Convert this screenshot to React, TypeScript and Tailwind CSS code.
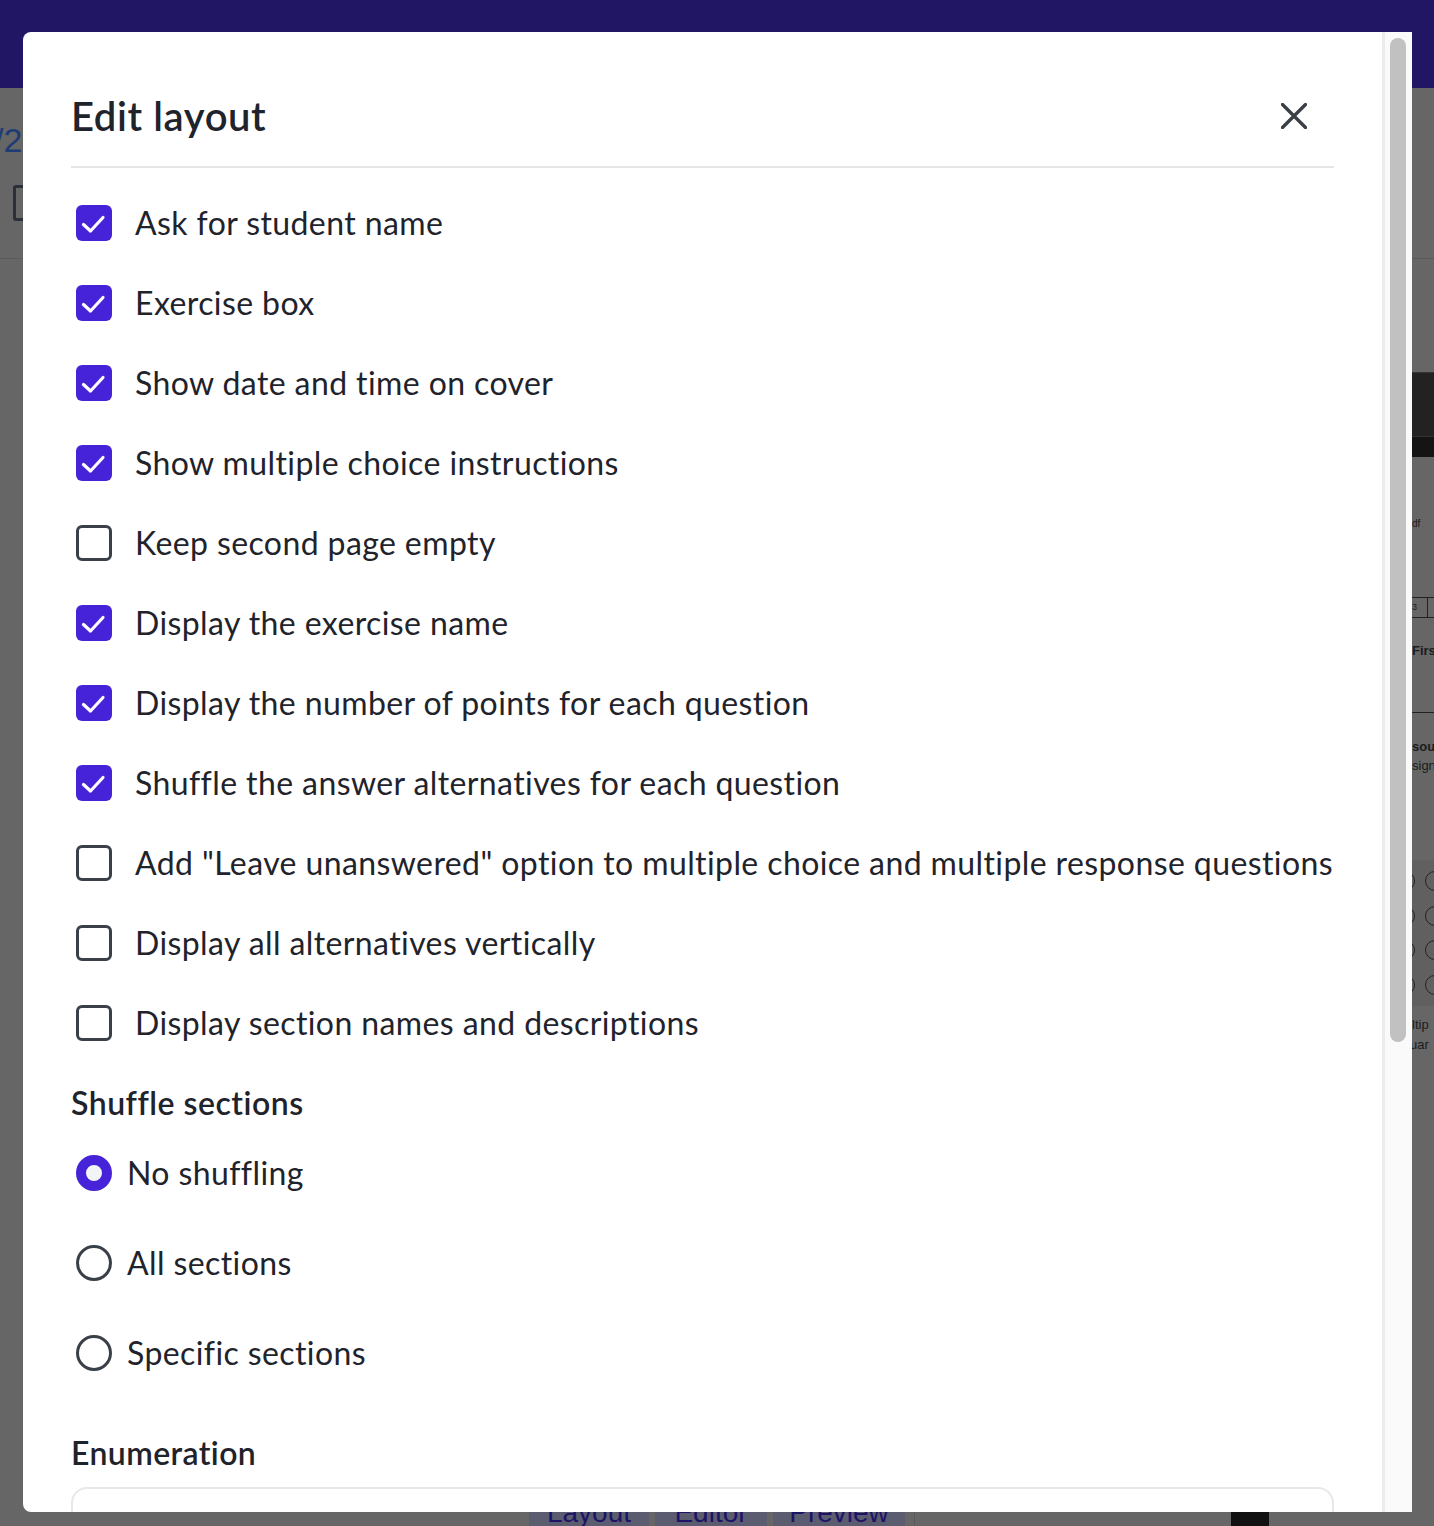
import React from "react";

const checkItems: { label: string; checked: boolean }[] = [
  { label: "Ask for student name", checked: true },
  { label: "Exercise box", checked: true },
  { label: "Show date and time on cover", checked: true },
  { label: "Show multiple choice instructions", checked: true },
  { label: "Keep second page empty", checked: false },
  { label: "Display the exercise name", checked: true },
  { label: "Display the number of points for each question", checked: true },
  { label: "Shuffle the answer alternatives for each question", checked: true },
  { label: 'Add "Leave unanswered" option to multiple choice and multiple response questions', checked: false },
  { label: "Display all alternatives vertically", checked: false },
  { label: "Display section names and descriptions", checked: false },
];

const radios = [
  { label: "No shuffling", selected: true },
  { label: "All sections", selected: false },
  { label: "Specific sections", selected: false },
];

function CheckBox({ checked }: { checked: boolean }) {
  if (checked) {
    return (
      <div className="w-[36px] h-[36px] rounded-[6px] bg-[#4623d9] flex items-center justify-center shrink-0">
        <svg width="36" height="36" viewBox="0 0 36 36" fill="none">
          <path d="M7.5 19.5 L14.5 26 L27 12.5" stroke="white" strokeWidth="3.2" strokeLinecap="round" strokeLinejoin="round" />
        </svg>
      </div>
    );
  }
  return <div className="w-[36px] h-[36px] rounded-[6px] border-[3px] border-[#3a4048] bg-white shrink-0" />;
}

function Radio({ selected }: { selected: boolean }) {
  if (selected) {
    return <div className="w-[36px] h-[36px] rounded-full border-[10px] border-[#4623d9] bg-[#f3f4f6] shrink-0" />;
  }
  return <div className="w-[36px] h-[36px] rounded-full border-[3px] border-[#3a4048] bg-white shrink-0" />;
}

function Background() {
  return (
    <div className="h-[1526px] w-[1434px] flex flex-col bg-[#666666] overflow-hidden font-['Liberation_Sans',sans-serif]">
      <div className="h-[88px] bg-[#211663] shrink-0" />
      <div className="h-[171px] shrink-0 border-b border-[#5a5a5a] flex flex-col">
        <div className="ml-[-6px] mt-[32px] text-[34px] leading-[40px] text-[#1f3b75]">/2</div>
        <div className="ml-[13px] mt-[25px] w-[16px] h-[36px] border-[3px] border-[#2b3038] rounded-[3px]" />
      </div>
      <div className="flex-1 flex">
        <div className="flex-1" />
        <div className="w-[22px] shrink-0 overflow-hidden flex flex-col text-[#1c1c1c]">
          <div className="mt-[113px] h-[65px] bg-[#222222] border-y border-[#333333] shrink-0" />
          <div className="h-[20px] bg-[#141414] shrink-0" />
          <div className="mt-[61px] text-[10px] leading-[12px] whitespace-nowrap">df</div>
          <div className="mt-[67px] h-[21px] border-y border-[#222222] flex text-[9px] leading-[19px] shrink-0">
            <span className="w-[16px] border-r border-[#222222]">3</span>
          </div>
          <div className="mt-[25px] text-[13px] leading-[16px] font-bold whitespace-nowrap">First</div>
          <div className="mt-[53px] h-px bg-[#222222] shrink-0" />
          <div className="mt-[24px] text-[13px] leading-[19px] font-bold whitespace-nowrap">sou</div>
          <div className="text-[13px] leading-[19px] whitespace-nowrap">sign</div>
          <div className="mt-[85px] h-[146px] bg-[#606060] flex flex-col justify-around py-[4px] shrink-0">
            {[0, 1, 2, 3].map((i) => (
              <div key={i} className="flex gap-[10px] ml-[-17px]">
                <div className="w-[20px] h-[20px] rounded-full border border-[#222222] shrink-0" />
                <div className="w-[20px] h-[20px] rounded-full border border-[#222222] shrink-0" />
              </div>
            ))}
          </div>
          <div className="mt-[9px] text-[13px] leading-[20px] whitespace-nowrap">ltip</div>
          <div className="text-[13px] leading-[20px] whitespace-nowrap ml-[-2px]">uar</div>
        </div>
      </div>
      <div className="h-[26px] shrink-0 flex items-start">
        <div className="ml-[529px] w-[120px] h-[26px] bg-[#5c5c70] text-[#1e1466] text-[28px] leading-[26px] text-center overflow-hidden">Layout</div>
        <div className="ml-[6px] w-[112px] h-[26px] bg-[#5c5c70] text-[#1e1466] text-[28px] leading-[26px] text-center overflow-hidden">Editor</div>
        <div className="ml-[6px] w-[132px] h-[26px] bg-[#5c5c70] text-[#1e1466] text-[28px] leading-[26px] text-center overflow-hidden">Preview</div>
        <div className="ml-[9px] w-px h-[26px] bg-[#5a5a5a]" />
        <div className="ml-[316px] w-[38px] h-[26px] bg-[#111111]" />
      </div>
    </div>
  );
}

export default function App() {
  return (
    <div className="relative w-[1434px] h-[1526px] overflow-hidden">
      <Background />
      <div className="absolute left-[23px] top-[32px] w-[1389px] h-[1480px] bg-white rounded-l-[8px] overflow-hidden flex font-['Lato',sans-serif] text-[#1f232b]">
        <div className="flex-1 px-[48px] overflow-hidden flex flex-col">
          <div className="pt-[62px] pb-[28px] border-b-2 border-[#e5e5e5] flex items-center justify-between shrink-0">
            <h1 className="text-[40px] leading-[44px] font-semibold tracking-[0.6px]">Edit layout</h1>
            <button className="mr-[27px] w-[26px] h-[26px] flex items-center justify-center">
              <svg width="26" height="26" viewBox="0 0 26 26" fill="none">
                <path d="M1.5 1.5 L24.5 24.5 M24.5 1.5 L1.5 24.5" stroke="#3b4047" strokeWidth="3.4" strokeLinecap="round" />
              </svg>
            </button>
          </div>
          <div className="pt-[15px] flex flex-col shrink-0">
            {checkItems.map((item) => (
              <div key={item.label} className="h-[80px] flex items-center pl-[5px] gap-[23px]">
                <CheckBox checked={item.checked} />
                <span className="text-[32px] leading-[40px] tracking-[0.4px] whitespace-nowrap">{item.label}</span>
              </div>
            ))}
          </div>
          <div className="mt-[20px] text-[32px] leading-[40px] font-semibold tracking-[0.5px] shrink-0">Shuffle sections</div>
          <div className="mt-[5px] flex flex-col shrink-0">
            {radios.map((r) => (
              <div key={r.label} className="h-[90px] flex items-center pl-[5px] gap-[15px]">
                <Radio selected={r.selected} />
                <span className="text-[32px] leading-[40px] tracking-[0.4px] whitespace-nowrap">{r.label}</span>
              </div>
            ))}
          </div>
          <div className="mt-[35px] text-[32px] leading-[40px] font-semibold tracking-[0.4px] shrink-0">Enumeration</div>
          <div className="mt-[14px] h-[80px] border-2 border-[#e8e8e8] rounded-[16px] shrink-0" />
        </div>
        <div className="w-[30px] shrink-0 border-l-[3px] border-[#ececec] bg-[#fafafa] relative">
          <div className="absolute top-[6px] left-[5px] w-[16px] h-[1004px] rounded-full bg-[#c1c1c1]" />
        </div>
      </div>
    </div>
  );
}
